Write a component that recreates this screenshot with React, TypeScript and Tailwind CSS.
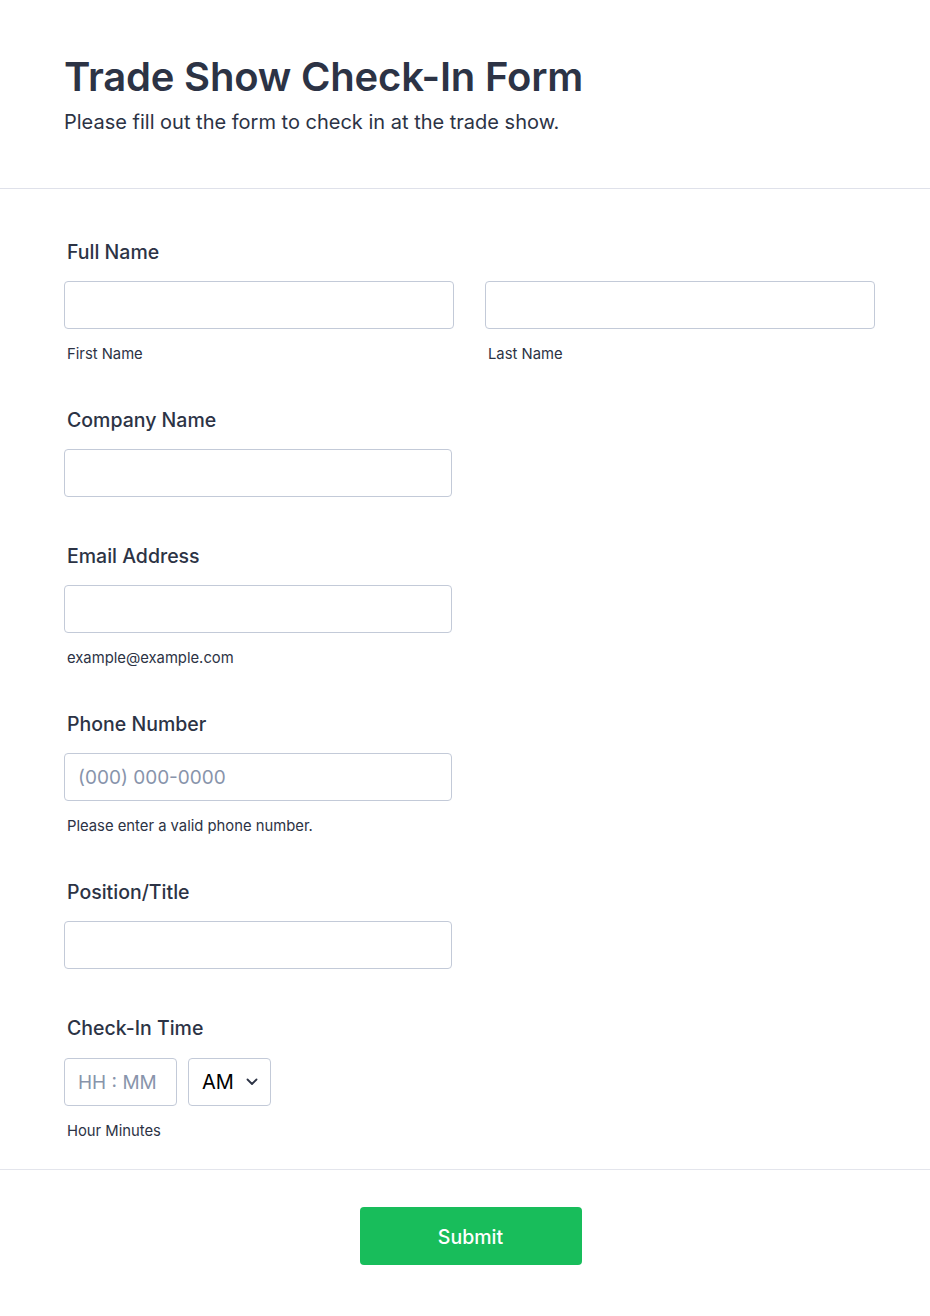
import React from 'react';

const labelCls = 'block text-[19.5px] leading-[28px] font-medium text-[#2c3345] pl-[3px]';
const inputCls =
  'block h-[48px] rounded-[4px] border border-[#c3cad8] bg-white px-[13px] text-[19px] text-[#2c3345] placeholder:text-[#8894ab] outline-none';
const subCls = 'block mt-[15px] text-[14.8px] leading-[20px] text-[#2c3345] pl-[3px]';

function Field({ label, sub, placeholder }: { label: string; sub?: string; placeholder?: string }) {
  return (
    <div className={sub ? 'mb-[42px]' : 'mb-[45px]'}>
      <label className={labelCls}>{label}</label>
      <input className={`${inputCls} mt-[15px] w-[388px]`} placeholder={placeholder} />
      {sub && <span className={subCls}>{sub}</span>}
    </div>
  );
}

export default function App() {
  return (
    <div className="min-h-[1316px] bg-white font-['Inter','Noto_Sans',sans-serif] text-[#2c3345]">
      <div className="px-[64px] pt-[53px] pb-[52px] border-b border-[#dfe1ea]">
        <h1 className="text-[40px] leading-[48px] font-semibold tracking-[-0.2px]">Trade Show Check-In Form</h1>
        <p className="mt-[7px] text-[20px] leading-[28px]">Please fill out the form to check in at the trade show.</p>
      </div>

      <div className="px-[64px] pt-[49px]">
        <div className="mb-[42px]">
          <label className={labelCls}>Full Name</label>
          <div className="mt-[15px] flex gap-[31px]">
            <div>
              <input className={`${inputCls} w-[390px]`} />
              <span className={subCls}>First Name</span>
            </div>
            <div>
              <input className={`${inputCls} w-[390px]`} />
              <span className={subCls}>Last Name</span>
            </div>
          </div>
        </div>

        <Field label="Company Name" />
        <Field label="Email Address" sub="example@example.com" />
        <Field label="Phone Number" placeholder="(000) 000-0000" sub="Please enter a valid phone number." />
        <Field label="Position/Title" />

        <div className="pb-[28px]">
          <label className={labelCls}>Check-In Time</label>
          <div className="mt-[16px] flex gap-[11px]">
            <input className={`${inputCls} w-[113px]`} placeholder="HH : MM" />
            <div className="flex h-[48px] w-[83px] items-center justify-between rounded-[4px] border border-[#c3cad8] bg-white pl-[13px] pr-[12px]">
              <span className="text-[20px] text-black">AM</span>
              <svg width="12" height="8" viewBox="0 0 12 8" fill="none">
                <path d="M1.5 1.5L6 6L10.5 1.5" stroke="#2c3345" strokeWidth="1.8" strokeLinecap="round" strokeLinejoin="round" />
              </svg>
            </div>
          </div>
          <span className={subCls}>Hour Minutes</span>
        </div>
      </div>

      <div className="border-t border-[#e3e5ec] pt-[37px] pb-[51px] flex justify-center">
        <button className="ml-[11px] h-[58px] w-[222px] rounded-[4px] bg-[#18bd5b] pt-[3px] text-[19.5px] font-medium text-white">
          Submit
        </button>
      </div>
    </div>
  );
}
